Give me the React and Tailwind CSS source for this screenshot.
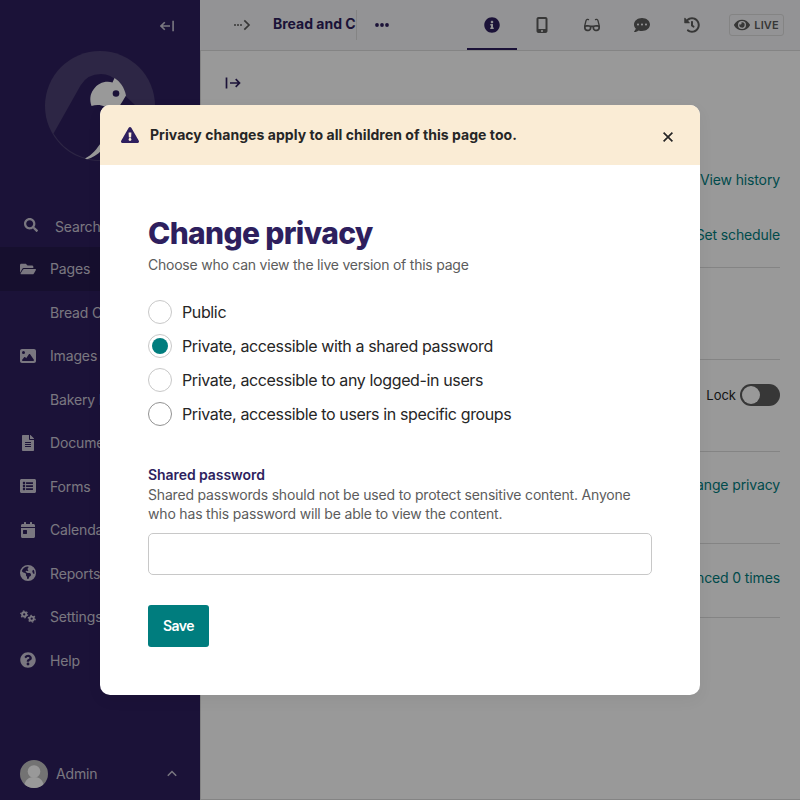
import React from "react";
import {
  FaInfoCircle, FaGlasses, FaCommentDots, FaHistory, FaEye, FaSearch,
  FaFolderOpen, FaFileAlt, FaCalendarDay, FaListAlt, FaQuestionCircle,
  FaExclamationTriangle,
} from "react-icons/fa";
import { FaImage, FaEarthAmericas, FaMobileScreenButton } from "react-icons/fa6";

function Cogs() {
  return (
    <svg viewBox="0 0 16 16" className="h-4 w-4">
      <g fill="none" stroke="currentColor">
        <circle cx="4.200" cy="5.400" r="2.100" strokeWidth="1.900" />
        <circle cx="4.200" cy="5.400" r="3.400" strokeWidth="1.300" strokeDasharray="1.500 2.060" />
        <circle cx="11.700" cy="9.700" r="2.100" strokeWidth="1.900" />
        <circle cx="11.700" cy="9.700" r="3.400" strokeWidth="1.300" strokeDasharray="1.500 2.060" />
      </g>
    </svg>
  );
}

function Logo() {
  return (
    <svg viewBox="0 0 110 110" className="h-[110px] w-[110px]">
      <circle cx="55" cy="55" r="55" fill="#4c4073" />
      <path d="M8.500 82.500 35.500 34.500Q42 23 56 23Q66 23 73 31L81 45.500L108 71A55 55 0 0 1 8.500 82.500Z" fill="#2e1f5e" />
      <path d="M46.500 55C44.500 49 45 43 48.500 38.500C53 32 60.500 29.500 67.500 31.500L69.500 27C75 30.500 79.500 36.500 81 44.500C79 48 77 51 74 56H60C56 53.500 51 53.500 46.500 55Z" fill="#fff" />
      <circle cx="71" cy="42.500" r="3.300" fill="#2e1f5e" />
      <path d="M40 107.500C47 104 52 98 57 90V99C52 104 47 107 42 108.300Z" fill="#fff" />
    </svg>
  );
}

const menu = [
  { label: "Pages", icon: <FaFolderOpen className="h-4 w-4" />, active: true },
  { label: "Bread Crumbs" },
  { label: "Images", icon: <FaImage className="h-4 w-4" /> },
  { label: "Bakery Misc" },
  { label: "Documents", icon: <FaFileAlt className="h-4 w-4" /> },
  { label: "Forms", icon: <FaListAlt className="h-4 w-4" /> },
  { label: "Calendar", icon: <FaCalendarDay className="h-4 w-4" /> },
  { label: "Reports", icon: <FaEarthAmericas className="h-4 w-4" /> },
  { label: "Settings", icon: <Cogs /> },
  { label: "Help", icon: <FaQuestionCircle className="h-4 w-4" /> },
];

function Sidebar() {
  return (
    <aside className="flex h-full w-[200px] shrink-0 flex-col overflow-hidden bg-[#2e1f5e] text-[14px] tracking-[-0.15px] text-[#cbc7d6]">
      <div className="flex h-[51px] items-center justify-end pr-[26px]">
        <svg viewBox="0 0 14 12" className="h-3 w-[14px]" fill="none" stroke="currentColor" strokeWidth="1.600">
          <path d="M10 6H1M4.800 2.200 1 6l3.800 3.800M13.100 .8v10.400" />
        </svg>
      </div>
      <div className="flex h-[154px] justify-center">
        <Logo />
      </div>
      <div className="flex h-[42px] items-center pl-6">
        <FaSearch className="-mt-0.5 h-[14px] w-[14px]" />
        <span className="ml-[17px] pt-px">Search</span>
      </div>
      <nav>
        {menu.map((m) => (
          <div
            key={m.label}
            className={"flex h-[43.5px] items-center whitespace-nowrap pl-5 " + (m.active ? "bg-[#261a4e]" : "")}
          >
            <span className="flex w-[30px]">{m.icon}</span>
            <span>{m.label}</span>
          </div>
        ))}
      </nav>
      <div className="mt-auto flex h-[52px] items-center px-5">
        <svg viewBox="0 0 28 28" className="h-7 w-7 rounded-full">
          <rect width="28" height="28" fill="#c0c0c0" />
          <circle cx="14" cy="11.500" r="6.300" fill="#fff" />
          <path d="M4 28C4 20 9 17 14 17s10 3 10 11Z" fill="#fff" />
        </svg>
        <span className="ml-2 grow pb-0.5">Admin</span>
        <svg viewBox="0 0 10 7" className="mr-[3px] mb-0.5 h-[7px] w-[10px]" fill="none" stroke="currentColor" strokeWidth="1.500">
          <path d="M.8 5.800 5 1.500l4.200 4.300" />
        </svg>
      </div>
    </aside>
  );
}

function TopBar() {
  return (
    <header className="flex h-[51px] shrink-0 items-center border-b border-[#dcdcdc] bg-[#f6f6f8] text-[#5c5c5c]">
      <svg viewBox="0 0 18 12" className="ml-[33px] h-3 w-[18px] shrink-0" fill="none" stroke="currentColor" strokeWidth="1.700">
        <path d="M11.300 1.300 16 6l-4.700 4.700" />
        <path d="M1 6h8" strokeDasharray="2 1" />
      </svg>
      <div className="ml-[22px] h-[30px] w-[84px] whitespace-nowrap border-r border-[#dcdcdc] text-[14px] font-bold leading-[28px] text-[#2e1f5e]">
        Bread and C
      </div>
      <svg viewBox="0 0 14 4" className="ml-[18px] h-1 w-[14px] text-[#2e1f5e]" fill="currentColor">
        <circle cx="2" cy="2" r="1.900" />
        <circle cx="7" cy="2" r="1.900" />
        <circle cx="12" cy="2" r="1.900" />
      </svg>
      <div className="ml-auto flex h-full items-center">
        <div className="flex h-full w-[50px] items-center justify-center border-b-2 border-[#2e1f5e] pt-0.5 text-[#2e1f5e]">
          <FaInfoCircle className="h-4 w-4" />
        </div>
        <div className="flex w-[50px] justify-center"><FaMobileScreenButton className="h-4 w-4" /></div>
        <div className="flex w-[50px] justify-center"><FaGlasses className="h-4 w-4" /></div>
        <div className="flex w-[50px] justify-center"><FaCommentDots className="h-4 w-4" /></div>
        <div className="flex w-[50px] justify-center"><FaHistory className="h-4 w-4" /></div>
      </div>
      <div className="ml-3 mr-4 flex h-[22px] w-[55px] items-center justify-center gap-1 rounded-[3px] border border-[#dcdcdc] text-[11px] font-semibold tracking-[0.1px]">
        <FaEye className="h-4 w-4" />
        <span>LIVE</span>
      </div>
    </header>
  );
}

function SidePanel() {
  const link = "whitespace-nowrap text-right text-[14px] leading-5 tracking-[-0.13px] text-[#007d7e]";
  const line = "border-b border-[#dcdcdc]";
  return (
    <section className="mr-5 flex flex-col pt-[67px]">
      <div className={"h-[55px] " + link}>View history</div>
      <div className={"h-[43px] " + link + " " + line}>Set schedule</div>
      <div className={"h-[92px] " + line} />
      <div className={"flex h-[92px] justify-end pt-[24px] " + line}>
        <span className="mr-1 text-[13px] leading-[22px] text-[#262626]">Lock</span>
        <span className="flex h-[22px] w-10 items-center rounded-full bg-[#5c5c5c] pl-0.5">
          <span className="h-[18px] w-[18px] rounded-full bg-white" />
        </span>
      </div>
      <div className={"h-[92px] pt-[23px] " + link + " " + line}>Change privacy</div>
      <div className={"h-[74px] pt-[24px] " + link + " " + line}>Referenced 0 times</div>
    </section>
  );
}

const options = [
  "Public",
  "Private, accessible with a shared password",
  "Private, accessible to any logged-in users",
  "Private, accessible to users in specific groups",
];

function PrivacyDialog() {
  return (
    <div className="flex h-[590px] w-[600px] flex-col overflow-hidden rounded-[10px] bg-white shadow-[0_5px_15px_rgba(0,0,0,0.05)]">
      <div className="flex h-[60px] shrink-0 items-center bg-[#faecd5] pl-[21px] pr-[27px]">
        <FaExclamationTriangle className="h-[18px] w-[18px] text-[#2e1f5e]" />
        <span className="ml-[11px] grow pb-0.5 text-[14px] font-bold tracking-[0.05px] text-[#262626]">
          Privacy changes apply to all children of this page too.
        </span>
        <svg viewBox="0 0 10 10" className="mt-1 h-[10px] w-[10px]" fill="none" stroke="#262626" strokeWidth="1.700">
          <path d="M.6 .6l8.800 8.800M9.400 .6.6 9.400" />
        </svg>
      </div>
      <div className="flex flex-col px-12 pt-[49px]">
        <h1 className="text-[30px] font-extrabold leading-[39px] tracking-[-0.65px] text-[#2e1f5e]">Change privacy</h1>
        <p className="mt-0.5 text-[14px] leading-5 tracking-[-0.23px] text-[#5c5c5c]">Choose who can view the live version of this page</p>
        <div className="mt-[25px] flex flex-col gap-[10px]">
          {options.map((o, i) => (
            <label key={o} className="flex h-6 items-center gap-[10px] text-[16px] tracking-[-0.37px] text-[#262626]">
              <span
                className={
                  "flex h-6 w-6 items-center justify-center rounded-full border " +
                  (i === 3 ? "border-[#929292]" : "border-[#c8c8c8]")
                }
              >
                {i === 1 && <span className="h-4 w-4 rounded-full bg-[#007d7e]" />}
              </span>
              <span>{o}</span>
            </label>
          ))}
        </div>
        <div className="mt-[39px] text-[14px] font-semibold leading-5 tracking-[-0.07px] text-[#2e1f5e]">Shared password</div>
        <p className="whitespace-nowrap text-[14px] leading-[19px] tracking-[-0.18px] text-[#5c5c5c]">
          Shared passwords should not be used to protect sensitive content. Anyone
          <br />
          who has this password will be able to view the content.
        </p>
        <input className="mt-[10px] h-[42px] rounded-[5px] border border-[#c8c8c8] bg-white px-4" />
        <button className="mt-[30px] h-[42px] w-[61px] rounded-[3px] bg-[#007d7e] pb-0.5 text-[14px] font-semibold tracking-[-0.5px] text-white">
          Save
        </button>
      </div>
    </div>
  );
}

export default function App() {
  return (
    <div className="relative h-[800px] w-[800px] overflow-hidden font-['Inter','Liberation_Sans',sans-serif]">
      <div className="flex h-full">
        <Sidebar />
        <main className="flex min-w-0 grow flex-col">
          <TopBar />
          <div className="grow border-b border-l border-[#dcdcdc] bg-white">
            <div className="flex h-[52px] items-end pl-6 pb-[14px]">
              <svg viewBox="0 0 16 12" className="h-3 w-4" fill="none" stroke="#2e1f5e" strokeWidth="1.700">
                <path d="M1.500 .5v11M5 6h9M10.700 2.200 14.500 6l-3.800 3.800" />
              </svg>
            </div>
            <SidePanel />
          </div>
        </main>
      </div>
      <div className="absolute inset-0 flex items-center justify-center bg-black/40">
        <PrivacyDialog />
      </div>
    </div>
  );
}
